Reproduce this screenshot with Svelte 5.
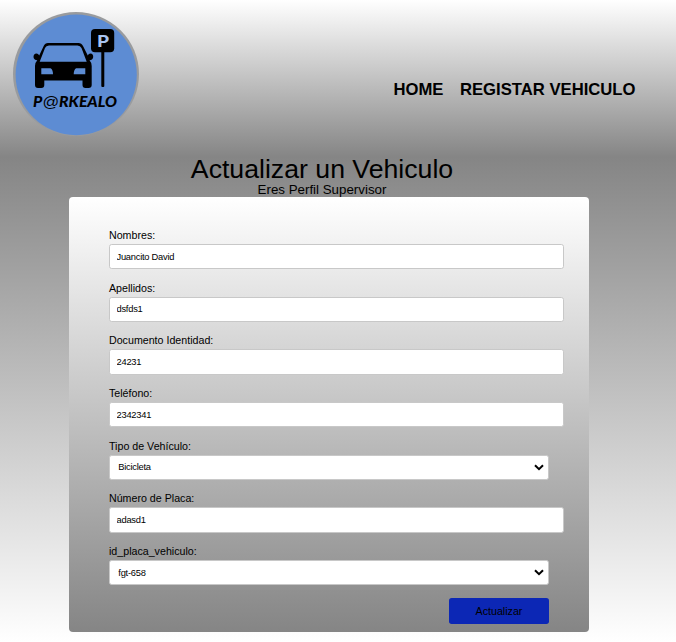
<script>
  const fields = [
    { id: 'nombres', label: 'Nombres:', value: 'Juancito David' },
    { id: 'apellidos', label: 'Apellidos:', value: 'dsfds1' },
    { id: 'documento', label: 'Documento Identidad:', value: '24231' },
    { id: 'telefono', label: 'Teléfono:', value: '2342341' },
    { id: 'tipo', label: 'Tipo de Vehículo:', value: 'Bicicleta', select: true },
    { id: 'placa', label: 'Número de Placa:', value: 'adasd1' },
    { id: 'id_placa', label: 'id_placa_vehiculo:', value: 'fgt-658', select: true }
  ];
</script>

<div class="page">
  <header>
    <svg class="logo" width="126" height="124" viewBox="13 12 126 124" role="img" aria-label="Parkealo">
      <ellipse cx="76" cy="74" rx="63" ry="62" fill="#999b9e" />
      <ellipse cx="76.200" cy="74.800" rx="60.600" ry="60.400" fill="#5d8cd3" />
      <path
        fill="#000"
        fill-rule="evenodd"
        d="M48 43H78.500Q81.500 43 83 46L87.800 55.500Q88.500 53.500 90.500 53.500Q93.300 53.800 93.200 57Q93 60 89.500 60.200Q91.700 62.500 91.700 66V85Q91.700 88 88.500 88H85.500Q82.500 88 82.500 85V80.400H44.300V85Q44.300 88 41.300 88H38Q35 88 35 85V66Q35 62.500 37.300 60.200Q33.700 60 33.500 57Q33.500 53.500 36.500 53.500Q38.300 53.500 39.200 55.500L43.700 46Q45 43 48 43ZM49 45.500Q46 45.500 45 48L39.700 61.700H86.700L81.500 48Q80.300 45.500 77.500 45.500ZM41.300 68.200H50.500Q53 69.500 53 74.300H41.300ZM85.300 68.200H76.200Q73.700 69.500 73.700 74.300H85.300Z"
      />
      <rect x="91" y="29" width="23.200" height="23.300" rx="4" fill="#000" />
      <rect x="101.300" y="50" width="3" height="37" rx="1" fill="#000" />
      <text class="parking" x="97" y="47" textLength="12" lengthAdjust="spacingAndGlyphs">P</text>
      <text class="brand" x="33" y="106.500" textLength="84" lengthAdjust="spacingAndGlyphs">P<tspan class="at">@</tspan>RKEALO</text>
    </svg>
    <nav>
      <a href="#home">HOME</a>
      <a href="#registrar">REGISTAR VEHICULO</a>
    </nav>
  </header>
  <main>
    <h1>Actualizar un Vehiculo</h1>
    <p>Eres Perfil Supervisor</p>
    <form>
      {#each fields as field}
        <div class="field">
          <label for={field.id}>{field.label}</label>
          {#if field.select}
            <div class="select">
              <select id={field.id}><option>{field.value}</option></select>
              <svg width="10" height="7" viewBox="0 0 10 7"><path d="M1 1.200L5 5.200L9 1.200" fill="none" stroke="#000" stroke-width="2" /></svg>
            </div>
          {:else}
            <input id={field.id} type="text" value={field.value} />
          {/if}
        </div>
      {/each}
      <button type="button">Actualizar</button>
    </form>
  </main>
</div>

<style>
  :global(body) { margin: 0; overflow: hidden; }
  .page {
    width: 676px;
    height: 642px;
    font-family: "Liberation Sans", Arial, sans-serif;
    color: #000;
    display: flex;
    flex-direction: column;
  }
  header {
    box-sizing: border-box;
    height: 157px;
    flex: none;
    padding: 12px 40.500px 0 13px;
    display: flex;
    justify-content: space-between;
    background: linear-gradient(#fff, #858585);
  }
  .logo { display: block; }
  .logo text { font-family: "Lato", "Liberation Sans", sans-serif; font-weight: bold; }
  .logo .brand {
    font-size: 14.500px;
    font-style: italic;
    font-weight: 900;
    fill: #000;
  }
  .logo .at { font-family: "Liberation Sans", sans-serif; font-size: 15px; font-weight: 400; }
  .logo .parking { font-size: 17px; font-weight: 900; fill: #a9c5f0; }
  nav { display: flex; gap: 16.500px; padding-top: 68px; }
  nav a {
    color: #000;
    text-decoration: none;
    font-size: 16.670px;
    font-weight: bold;
    line-height: 20px;
    white-space: nowrap;
  }
  main {
    flex: 1;
    display: flex;
    flex-direction: column;
    background: linear-gradient(#858585, #fff);
  }
  h1 {
    margin: 0;
    width: 644px;
    text-align: center;
    font-size: 26.670px;
    line-height: 25px;
    font-weight: normal;
  }
  p {
    margin: 0;
    width: 644px;
    text-align: center;
    font-size: 13.330px;
    line-height: 15px;
  }
  form {
    box-sizing: border-box;
    width: 520px;
    height: 435px;
    margin-left: 69px;
    padding: 29px 40px 0;
    border-radius: 4px;
    background: linear-gradient(#fff, #858585);
    display: flex;
    flex-direction: column;
  }
  .field { height: 52.670px; flex: none; display: flex; flex-direction: column; }
  label { font-size: 10.670px; line-height: 18px; height: 18px; }
  input, select {
    box-sizing: border-box;
    height: 25.330px;
    border: 1px solid #c8c8c8;
    border-radius: 2.670px;
    background: #fff;
    color: #000;
    font-family: inherit;
    font-size: 9.330px;
    letter-spacing: -.25px;
    outline: none;
    margin: 0;
  }
  input { width: 455px; padding: 0 6.500px; }
  .select { width: 440px; display: flex; align-items: center; }
  select { width: 440px; padding: 0 8.300px; appearance: none; }
  .select svg { flex: none; margin-left: -15px; pointer-events: none; }
  button {
    align-self: flex-end;
    width: 100px;
    height: 26px;
    margin-top: 3.300px;
    padding: 0;
    border: 0;
    border-radius: 2.670px;
    background: #0c27b5;
    color: #000;
    font-family: inherit;
    font-size: 10.670px;
  }
</style>
